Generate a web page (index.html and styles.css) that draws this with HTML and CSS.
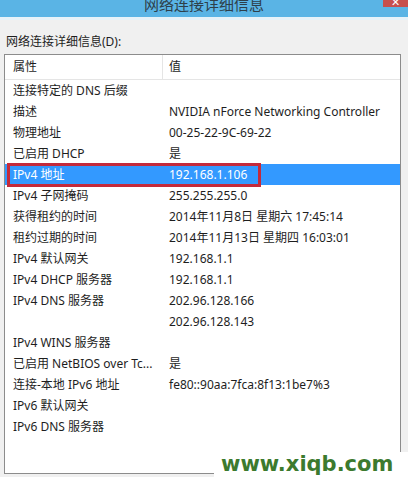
FILE: index.html
```html
<!DOCTYPE html>
<html lang="zh-CN">
  <head>
    <meta charset="UTF-8" />
    <meta name="viewport" content="width=device-width, initial-scale=1.0" />
    <title>网络连接详细信息</title>
    <link rel="stylesheet" href="styles.css">
  </head>

  <body>
    <div class="titlebar">
      <span class="title">网络连接详细信息</span>
      <span class="close">✕</span>
    </div>
    <div class="band"></div>

    <div class="dialog">
      <p class="caption">网络连接详细信息(D):</p>

      <div class="list">
        <div class="list-head">
          <div class="prop">属性</div>
          <div class="val">值</div>
        </div>
        <div class="row"><div class="prop">连接特定的 DNS 后缀</div><div class="val"></div></div>
        <div class="row"><div class="prop">描述</div><div class="val">NVIDIA nForce Networking Controller</div></div>
        <div class="row"><div class="prop">物理地址</div><div class="val">00-25-22-9C-69-22</div></div>
        <div class="row"><div class="prop">已启用 DHCP</div><div class="val">是</div></div>
        <div class="row selected">
          <div class="prop">IPv4 地址</div><div class="val">192.168.1.106</div>
          <div class="mark"></div>
        </div>
        <div class="row"><div class="prop">IPv4 子网掩码</div><div class="val">255.255.255.0</div></div>
        <div class="row"><div class="prop">获得租约的时间</div><div class="val">2014年11月8日 星期六 17:45:14</div></div>
        <div class="row"><div class="prop">租约过期的时间</div><div class="val">2014年11月13日 星期四 16:03:01</div></div>
        <div class="row"><div class="prop">IPv4 默认网关</div><div class="val">192.168.1.1</div></div>
        <div class="row"><div class="prop">IPv4 DHCP 服务器</div><div class="val">192.168.1.1</div></div>
        <div class="row"><div class="prop">IPv4 DNS 服务器</div><div class="val">202.96.128.166</div></div>
        <div class="row"><div class="prop"></div><div class="val">202.96.128.143</div></div>
        <div class="row"><div class="prop">IPv4 WINS 服务器</div><div class="val"></div></div>
        <div class="row"><div class="prop">已启用 NetBIOS over Tc...</div><div class="val">是</div></div>
        <div class="row"><div class="prop">连接-本地 IPv6 地址</div><div class="val">fe80::90aa:7fca:8f13:1be7%3</div></div>
        <div class="row"><div class="prop">IPv6 默认网关</div><div class="val"></div></div>
        <div class="row"><div class="prop">IPv6 DNS 服务器</div><div class="val"></div></div>
      </div>
    </div>

    <div class="watermark">www.xiqb.com</div>
  </body>
</html>
```

FILE: styles.css
```css
* {
  margin: 0;
  padding: 0;
  box-sizing: border-box;
}

body {
  background: #f0f0f0;
  font-family: "Noto Sans", "Noto Sans CJK SC", sans-serif;
  font-size: 12px;
  color: #1e1e1e;
  width: 408px;
  height: 477px;
  overflow: hidden;
  position: relative;
}

.titlebar {
  height: 17px;
  background: #5ab4e5;
  overflow: hidden;
  text-align: center;
  position: relative;
}

.title {
  display: block;
  font-size: 15px;
  line-height: 9px;
  color: #2e3f4a;
}

.close {
  position: absolute;
  top: 0;
  right: 0;
  width: 25px;
  height: 7px;
  background: #c7504d;
  color: #fff;
  font-size: 11px;
  line-height: 4px;
  text-align: center;
  overflow: hidden;
}

.band {
  height: 3px;
  background: #e6f2f9;
}

.dialog {
  padding: 14px 0 0 4px;
}

.caption {
  margin-left: 2px;
  font-size: 12px;
  line-height: 16px;
  height: 16px;
  margin-bottom: 4px;
}

.list {
  width: 397px;
  height: 420px;
  border: 1px solid #8c8c8c;
  background: #fff;
}

.list-head,
.row {
  display: grid;
  grid-template-columns: 158px 1fr;
}

.list-head {
  height: 25px;
  line-height: 24px;
  border-bottom: 1px solid #e5e5e5;
}

.list-head .prop {
  border-right: 1px solid #e5e5e5;
}

.row {
  height: 21px;
  line-height: 21px;
  position: relative;
}

.prop,
.val {
  white-space: nowrap;
  overflow: hidden;
}

.prop {
  padding-left: 8px;
}

.val {
  padding-left: 6px;
}

.row.selected {
  background: #3399ff;
  color: #fff;
}

.mark {
  position: absolute;
  top: -1px;
  left: 2px;
  width: 254px;
  height: 24px;
  border: 3px solid #c42a3b;
}

.watermark {
  position: absolute;
  left: 214px;
  top: 452px;
  width: 194px;
  height: 25px;
  background: #fff;
  padding-left: 7px;
  font-family: "DejaVu Sans", sans-serif;
  font-weight: bold;
  font-size: 21px;
  line-height: 24px;
  color: #3c7a2e;
}
```
